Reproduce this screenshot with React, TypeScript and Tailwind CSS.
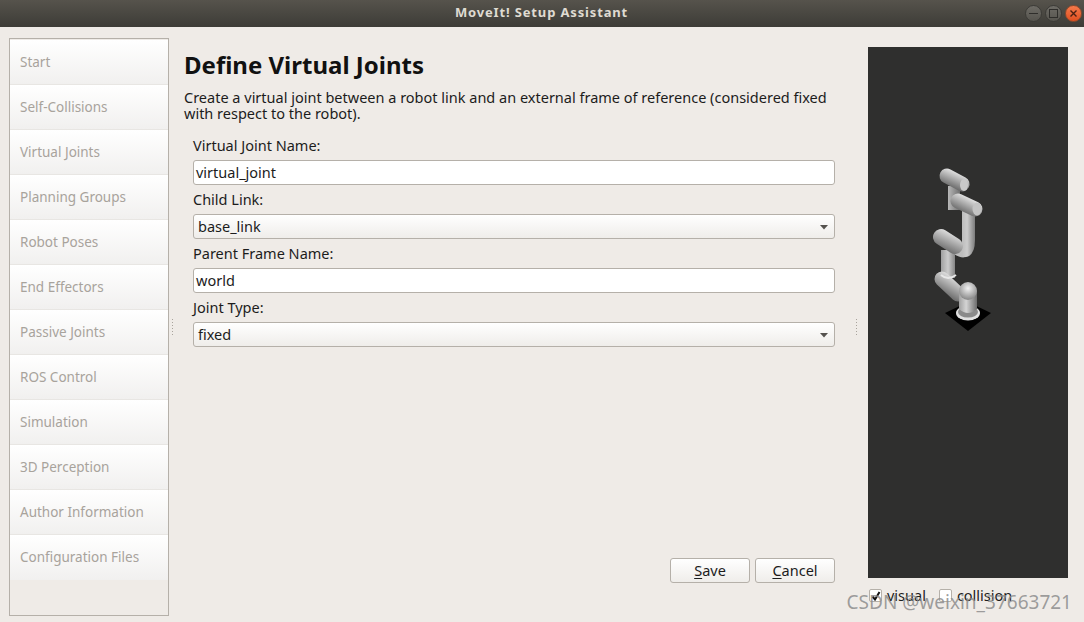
import React from "react";

const steps = [
  "Start",
  "Self-Collisions",
  "Virtual Joints",
  "Planning Groups",
  "Robot Poses",
  "End Effectors",
  "Passive Joints",
  "ROS Control",
  "Simulation",
  "3D Perception",
  "Author Information",
  "Configuration Files",
];

function Label({ children }: { children: React.ReactNode }) {
  return <div className="h-[21px] pt-[1px] text-[14.5px] leading-[20px] text-[#1c1c1c]">{children}</div>;
}

function TextField({ value }: { value: string }) {
  return (
    <div className="h-[25px] rounded-[3px] border border-[#b5b0a9] bg-white pl-[2px] text-[14.5px] leading-[23px] text-[#1c1c1c]">
      {value}
    </div>
  );
}

function Combo({ value }: { value: string }) {
  return (
    <div className="flex h-[25px] items-center justify-between rounded-[3px] border border-[#b5b0a9] bg-gradient-to-b from-white to-[#efedea] pl-[4px] pr-[5px] text-[14.5px] text-[#1c1c1c]">
      <span>{value}</span>
      <svg width="10" height="6" viewBox="0 0 10 6">
        <path d="M1 1h8L5 5.500z" fill="#55524e" />
      </svg>
    </div>
  );
}

function Splitter() {
  return (
    <div className="flex h-[578px] w-[6px] shrink-0 flex-col items-center justify-center gap-[2px]">
      {[0, 1, 2, 3, 4, 5].map((i) => (
        <div key={i} className="h-[1px] w-[1px] bg-[#a8a39c]" />
      ))}
    </div>
  );
}

function Btn({ mnemonic, rest }: { mnemonic: string; rest: string }) {
  return (
    <div className="flex h-[25px] w-[80px] items-center justify-center rounded-[3px] border border-[#b5b0a9] bg-gradient-to-b from-white to-[#efedea] text-[14.5px] text-[#1c1c1c]">
      <span className="underline underline-offset-2">{mnemonic}</span>
      {rest}
    </div>
  );
}

function WindowButton({ children, close }: { children: React.ReactNode; close?: boolean }) {
  return (
    <div
      className={
        close
          ? "flex h-[17px] w-[17px] items-center justify-center rounded-full border border-[#8f4a2c] bg-gradient-to-b from-[#f4794a] to-[#df4f1f]"
          : "flex h-[17px] w-[17px] items-center justify-center rounded-full border border-[#3c3b37] bg-gradient-to-b from-[#6e6c66] to-[#56544e]"
      }
    >
      {children}
    </div>
  );
}

function Robot() {
  return (
    <svg width="110" height="190" viewBox="0 0 110 190" fill="none">
      <defs>
        <linearGradient id="v" x1="0" x2="1" y1="0" y2="0">
          <stop offset="0" stopColor="#a0a0a0" />
          <stop offset="0.4" stopColor="#d4d4d4" />
          <stop offset="1" stopColor="#6c6c6c" />
        </linearGradient>
        <linearGradient id="tube" gradientUnits="userSpaceOnUse" x1="62" x2="75" y1="0" y2="0">
          <stop offset="0" stopColor="#bdbdbd" />
          <stop offset="0.4" stopColor="#cccccc" />
          <stop offset="1" stopColor="#7c7c7c" />
        </linearGradient>
        <linearGradient id="wrist" gradientUnits="userSpaceOnUse" x1="48" x2="60" y1="0" y2="0">
          <stop offset="0" stopColor="#b8b8b8" />
          <stop offset="1" stopColor="#707070" />
        </linearGradient>
        <linearGradient id="arm" gradientUnits="userSpaceOnUse" x1="41" x2="55" y1="0" y2="0">
          <stop offset="0" stopColor="#a0a0a0" />
          <stop offset="0.5" stopColor="#cccccc" />
          <stop offset="1" stopColor="#858585" />
        </linearGradient>
        <linearGradient id="top" gradientUnits="userSpaceOnUse" x1="57" y1="23" x2="51" y2="37">
          <stop offset="0" stopColor="#dcdcdc" />
          <stop offset="1" stopColor="#6c6c6c" />
        </linearGradient>
        <linearGradient id="top2" gradientUnits="userSpaceOnUse" x1="70" y1="48" x2="63" y2="62">
          <stop offset="0" stopColor="#e2e2e2" />
          <stop offset="1" stopColor="#707070" />
        </linearGradient>
        <linearGradient id="mid" gradientUnits="userSpaceOnUse" x1="52" y1="83" x2="44" y2="100">
          <stop offset="0" stopColor="#dedede" />
          <stop offset="1" stopColor="#6e6e6e" />
        </linearGradient>
        <linearGradient id="sh" gradientUnits="userSpaceOnUse" x1="53" y1="128" x2="44" y2="143">
          <stop offset="0" stopColor="#d8d8d8" />
          <stop offset="1" stopColor="#727272" />
        </linearGradient>
        <radialGradient id="dome" cx="0.5" cy="0.35" r="0.6">
          <stop offset="0" stopColor="#f2f2f2" />
          <stop offset="1" stopColor="#8d8d8d" />
        </radialGradient>
      </defs>
      <path d="M45 163L68 152L91 163L68 181Z" fill="#000" />
      <ellipse cx="68" cy="163" rx="12" ry="7.500" fill="#e0e0e0" />
      <ellipse cx="68" cy="162" rx="10" ry="5.500" fill="#8a8a8a" />
      {/* top link */}
      <path d="M54 36V60" stroke="url(#wrist)" strokeWidth="12" />
      <path d="M47 26L62 34" stroke="url(#top)" strokeWidth="15" strokeLinecap="round" />
      <ellipse cx="64" cy="35" rx="4" ry="6" fill="#c9c9c9" />
      {/* long tube */}
      <path d="M54 96C60 101 68.500 106 68.500 90V60" stroke="url(#tube)" strokeWidth="13" />
      <path d="M58 51L75 59" stroke="url(#top2)" strokeWidth="15" strokeLinecap="round" />
      <ellipse cx="77" cy="59" rx="4.500" ry="6.500" fill="#c4c4c4" />
      {/* elbow */}
      <path d="M48 100V128" stroke="url(#arm)" strokeWidth="14" />
      <path d="M41 87L55 96" stroke="url(#mid)" strokeWidth="16" strokeLinecap="round" />
      {/* shoulder */}
      <path d="M42 129L58 144" stroke="url(#sh)" strokeWidth="15" strokeLinecap="round" />
      <path d="M41 125Q48 131 56 125" stroke="#e8e8e8" strokeWidth="2" />
      {/* base */}
      <path d="M59 141V159Q68 167 77 159V141Z" fill="url(#v)" />
      <ellipse cx="68" cy="141" rx="9" ry="9" fill="url(#dome)" />
    </svg>
  );
}

export default function App() {
  return (
    <div className="relative flex h-[622px] w-[1084px] flex-col overflow-hidden bg-[#efebe7] font-['Noto_Sans',sans-serif]">
      <div className="flex h-[27px] shrink-0 items-center bg-gradient-to-b from-[#56534c] to-[#3d3c37] pr-[1px]">
        <div className="flex-1 pb-[2px] pl-[58px] text-center text-[13px] font-bold tracking-[0.85px] text-[#dfdbd2]">
          MoveIt! Setup Assistant
        </div>
        <div className="flex items-center gap-[3px] pr-[1px]">
          <WindowButton>
            <div className="h-[1.5px] w-[9px] bg-[#2f2e2b]" />
          </WindowButton>
          <WindowButton>
            <div className="h-[9px] w-[9px] border border-[#2f2e2b]" />
          </WindowButton>
          <WindowButton close>
            <svg width="9" height="9" viewBox="0 0 9 9">
              <path d="M1.500 1.500l6 6M7.500 1.500l-6 6" stroke="#4a2113" strokeWidth="1.400" />
            </svg>
          </WindowButton>
        </div>
      </div>

      <div className="flex flex-1 pl-[9px] pt-[11px]">
        <div className="flex h-[578px] w-[160px] shrink-0 flex-col border border-[#b5b0a9] pt-[1px]">
          {steps.map((s) => (
            <div
              key={s}
              className="flex h-[45px] shrink-0 items-center border-b border-[#e8e6e3] bg-gradient-to-b from-white to-[#f1f0ef] pl-[10px] text-[13.5px] text-[#a8a39c] last:border-b-0"
            >
              {s}
            </div>
          ))}
        </div>
        <Splitter />

        <div className="flex h-[578px] w-[660px] shrink-0 flex-col pl-[9px]">
          <h1 className="mt-[10px] h-[34px] text-[24px] font-bold leading-[34px] text-[#111]">Define Virtual Joints</h1>
          <p className="mt-[7px] w-[650px] text-[14.5px] leading-[16px] text-[#1c1c1c]">
            Create a virtual joint between a robot link and an external frame of reference (considered fixed with respect to the robot).
          </p>
          <div className="mt-[13px] flex flex-col gap-[3px] pl-[9px]">
            <div>
              <Label>Virtual Joint Name:</Label>
              <div className="mt-[5px]">
                <TextField value="virtual_joint" />
              </div>
            </div>
            <div>
              <Label>Child Link:</Label>
              <div className="mt-[5px]">
                <Combo value="base_link" />
              </div>
            </div>
            <div>
              <Label>Parent Frame Name:</Label>
              <div className="mt-[5px]">
                <TextField value="world" />
              </div>
            </div>
            <div>
              <Label>Joint Type:</Label>
              <div className="mt-[5px]">
                <Combo value="fixed" />
              </div>
            </div>
          </div>
          <div className="mt-auto mb-[33px] flex justify-end gap-[5px]">
            <Btn mnemonic="S" rest="ave" />
            <Btn mnemonic="C" rest="ancel" />
          </div>
        </div>

        <div className="ml-[18px]">
          <Splitter />
        </div>

        <div className="ml-[9px] w-[200px] shrink-0 pt-[9px]">
          <div className="flex h-[531px] justify-start bg-[#2f2f2e] pl-[32px] pt-[103px]">
            <Robot />
          </div>
          <div className="mt-[7px] flex items-center pl-[1px] text-[14.5px] text-[#1c1c1c]">
            <div className="flex h-[13px] w-[13px] items-center justify-center rounded-[2px] border border-[#b5b0a9] bg-white">
              <svg width="10" height="10" viewBox="0 0 10 10">
                <path d="M1.500 5.500L4 8.500L8.500 1" stroke="#111" strokeWidth="2" fill="none" />
              </svg>
            </div>
            <span className="ml-[5px]">visual</span>
            <div className="ml-[13px] h-[13px] w-[13px] rounded-[2px] border border-[#b5b0a9] bg-white" />
            <span className="ml-[5px]">collision</span>
          </div>
        </div>
      </div>

      {/* CSDN watermark on top of the checkboxes */}
      <div className="absolute right-[12px] top-[589px] text-[19px] leading-[26px] text-[#8d8d8d]/85">
        CSDN @weixin_37663721
      </div>
    </div>
  );
}
